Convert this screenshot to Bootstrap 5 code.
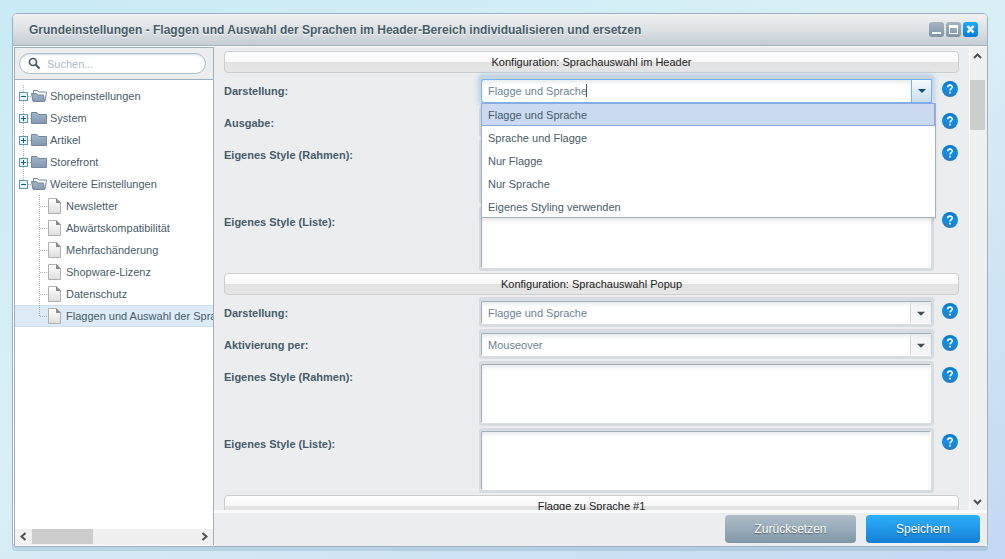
<!DOCTYPE html>
<html lang="de">
<head>
<meta charset="utf-8">
<meta name="viewport" content="width=device-width, initial-scale=1">
<title>Grundeinstellungen</title>
<link href="https://cdn.jsdelivr.net/npm/bootstrap@5.3.0/dist/css/bootstrap.min.css" rel="stylesheet">
<style>
  body { font: 11px/16px "Liberation Sans", Arial, sans-serif; color: #475c6a; padding: 13px 17px 12px 12px;
    background: linear-gradient(155deg, #c8ebf5 0%, #d9eff5 45%, #d3e7f4 65%, #c2d9f2 100%); }
  .window { min-height: 0; border: 1px solid #9fb1c0; border-radius: 5px 5px 4px 4px; background: #fafbfb; box-shadow: 0 4px 0 rgba(130,160,185,.3); }
  .window-body, .scroller { min-height: 0; }
  .titlebar { height: 32px; padding: 0 9px 0 16px; border-bottom: 1px solid #9fb1c0; border-radius: 4px 4px 0 0;
    background: linear-gradient(#f0f1f2, #dfe3e6 45%, #c4cdd4); }
  .titlebar h1 { font-size: 12px; line-height: 16px; font-weight: bold; color: #475c6a; text-shadow: 0 1px 0 #fff; }
  .tools { gap: 2px; }
  .tool { width: 15px; height: 15px; border: 0; padding: 0; border-radius: 3px; background: linear-gradient(#a3b4c1, #7f95a5); }
  .tool-close { background: linear-gradient(#1eaaff, #0a7bd6); }
  .tool svg, .help svg { display: block; }

  .sidebar { width: 200px; margin: 1px 0 1px 1px; border: 1px solid #9fb1c0; border-bottom: 0; background: #fff; }
  .searchbar { height: 32px; padding: 5px 7px 5px 4px; background: #ebedef; border-bottom: 1px solid #9fb1c0; }
  .searchbar svg { position: absolute; left: 9px; top: 4px; }
  .searchbar input { height: 21px; padding: 0 8px 0 27px; border: 1px solid #aebfce; border-radius: 11px; font-size: 11px; color: #475c6a;
    box-shadow: inset 0 1px 2px #d4dde4; }
  .searchbar input::placeholder { color: #aabac6; opacity: 1; }
  .tree { padding: 5px 0 0; }
  .tree a { height: 22px; padding-left: 4px; color: #475c6a; text-decoration: none; white-space: nowrap; }
  .tree a.selected { background: #dcebf6; box-shadow: inset 0 1px #cddfee, inset 0 -1px #cddfee; }
  .tree svg { flex: none; display: block; }
  .hscroll { height: 16px; background: #f0f0f0; padding: 0 5px; }
  .hthumb { width: 61px; height: 15px; background: #cdcdcd; margin-left: 6px; }

  .pane { min-width: 0; background: #ebedef; margin-top: 1px; }
  .fields { padding: 4px 10px 0; gap: 2px; }
  .section-head { flex: none; height: 22px; border: 1px solid #cdcdcd; border-radius: 4px; font-size: 11px; line-height: 20px; color: #222; font-weight: normal;
    background: linear-gradient(#fff, #f8f8f8 50%, #e2e2e2 50%, #e6e6e6); }
  .field-row { flex: none; }
  .field-row > label { width: 255px; flex: none; padding-top: 8px; font-weight: bold; line-height: 16px; }
  .halo { background: #d7dce2; border-radius: 3px; padding: 4px 2px 3px; }
  .halo-area { padding: 3px 3px 3px 2px; }
  .halo .form-control, .halo .form-select { border: 1px solid #9fafba; border-right-color: #c5ced6; border-bottom-color: #fff; border-radius: 2px;
    font-size: 11px; line-height: 16px; color: #6b8394; padding: 0 6px; background-color: #fff; box-shadow: inset 0 3px 4px -1px #e3e8e8; }
  .halo .form-select { height: 23px; }
  .halo textarea.form-control { height: 59px; resize: none; display: block; border-right-color: #fff; }
  .halo .form-select { padding-right: 26px; background-repeat: no-repeat; background-position: right; background-size: 21px 22px;
    background-image: url("data:image/svg+xml,%3Csvg xmlns='http://www.w3.org/2000/svg' width='21' height='22'%3E%3Crect width='21' height='22' fill='%23f4f6f8'/%3E%3Cpath d='M.5 0V22' stroke='%23ced5da'/%3E%3Cpath d='M7 10h8l-4 4z' fill='%23404c56'/%3E%3C/svg%3E"); }
  .focused .halo { padding-bottom: 2px; background: linear-gradient(#c5d4e0, #d7dce2); box-shadow: 0 0 5px rgba(110,180,235,.6); }
  .halo .form-control.combo { height: 24px; border: 1px solid #74b2e8; border-right: 0; border-radius: 3px 0 0 3px; }
  .trigger { width: 21px; border: 1px solid #74b2e8; padding: 0; background: linear-gradient(#f6fafd, #c9dcec); }
  .caret-bar { position: absolute; left: 107px; top: 9px; width: 1px; height: 13px; background: #475c6a; }
  .options { position: absolute; z-index: 5; left: 2px; right: -2px; top: 28px; background: #fff; border: 1px solid #9fb1c0; border-top: 0; box-shadow: 0 3px 3px rgba(0,0,0,.08); }
  .options li { height: 23px; padding: 0 6px; line-height: 24px; }
  .options li:last-child { height: 22px; }
  .options li.active { margin-left: -1px; border: 1px solid #8da9e2; line-height: 23px; background: #cbdaf0; }
  .help { width: 16px; height: 16px; margin: 6px 1px 0 8px; border: 0; padding: 0; background: none; flex: none; }
  .vscroll { width: 18px; background: #f0f0f0; border-left: 1px solid #fff; padding: 5px 2px 4px 0; }
  .vthumb { width: 15px; height: 50px; background: #cdcdcd; margin-top: 20px; }
  .actions { height: 36px; padding: 2px 7px 0 0; gap: 10px; border-top: 3px solid #fafbfb; }
  .actions .btn { height: 28px; padding: 0; border: 0; border-radius: 4px; font-size: 12px; line-height: 28px; color: #fff; text-shadow: 0 1px 1px rgba(0,0,0,.4); }
  .btn-reset { width: 131px; background: linear-gradient(#aebdc8, #8097a7); }
  .btn-save { width: 114px; background: linear-gradient(#2cb0fa, #167ed5); }
</style>
</head>
<body class="vh-100 d-flex flex-column overflow-hidden">
<svg class="position-absolute" width="0" height="0" aria-hidden="true">
  <defs>
    <linearGradient id="gf" x2="0" y2="1"><stop stop-color="#a3b6c9"/><stop offset="1" stop-color="#8298b0"/></linearGradient>
    <linearGradient id="gp" x2="0" y2="1"><stop stop-color="#fff"/><stop offset="1" stop-color="#dedede"/></linearGradient>
    <linearGradient id="gh" x2="0" y2="1"><stop stop-color="#0a75c4"/><stop offset=".45" stop-color="#0d8fe8"/><stop offset="1" stop-color="#2a7bbb"/></linearGradient>
  </defs>
</svg>
<main class="window flex-grow-1 d-flex flex-column">
  <header class="titlebar d-flex align-items-center flex-shrink-0">
    <h1 class="m-0 flex-grow-1">Grundeinstellungen - Flaggen und Auswahl der Sprachen im Header-Bereich individualisieren und ersetzen</h1>
    <div class="tools d-flex">
      <button class="tool" aria-label="Minimieren"><svg width="15" height="15"><path d="M3 10h9v2H3z" fill="#fff"/></svg></button>
      <button class="tool" aria-label="Maximieren"><svg width="15" height="15"><path d="M3 3h9v9H3zM4 6v5h7V6z" fill="#fff" fill-rule="evenodd"/></svg></button>
      <button class="tool tool-close" aria-label="Schließen"><svg width="15" height="15"><path d="M4.500 4l6 6.500M10.500 4l-6 6.500" stroke="#fff" stroke-width="2.500"/></svg></button>
    </div>
  </header>
  <div class="window-body d-flex flex-grow-1">
    <aside class="sidebar d-flex flex-column flex-shrink-0 overflow-hidden">
      <div class="searchbar flex-shrink-0">
        <div class="position-relative">
          <input type="search" class="form-control" placeholder="Suchen..." aria-label="Suchen">
          <svg width="13" height="13" fill="none" stroke="#475c6a"><circle cx="5" cy="5" r="3.500" stroke-width="1.700"/><path d="M7.500 7.500L11.500 11.500" stroke-width="2.200"/></svg>
        </div>
      </div>
      <nav class="tree flex-grow-1 overflow-hidden" id="tree" aria-label="Einstellungen"></nav>
      <div class="hscroll d-flex flex-shrink-0" aria-hidden="true">
        <svg width="6" height="15"><path d="M5.500 4L1.500 7.500L5.500 11" fill="none" stroke="#505050" stroke-width="2"/></svg>
        <div class="hthumb"></div>
        <svg class="ms-auto" width="6" height="15"><path d="M.5 4L4.500 7.500L.5 11" fill="none" stroke="#505050" stroke-width="2"/></svg>
      </div>
    </aside>
    <section class="pane flex-grow-1 d-flex flex-column">
      <div class="scroller d-flex flex-grow-1 overflow-hidden">
        <form class="fields d-flex flex-column flex-grow-1">
          <h2 class="section-head m-0 text-center">Konfiguration: Sprachauswahl im Header</h2>
          <div class="field-row focused d-flex align-items-start">
            <label for="f1">Darstellung:</label>
            <div class="halo flex-grow-1 position-relative d-flex">
              <input id="f1" type="text" class="form-control combo" role="combobox" aria-expanded="true" aria-controls="opts" value="Flagge und Sprache">
              <button type="button" class="trigger flex-shrink-0" aria-label="Auswahl"><svg class="d-block mx-auto" width="8" height="4"><path d="M0 0h8L4 4z" fill="#0d4f86"/></svg></button>
              <span class="caret-bar"></span>
              <ul class="options list-unstyled m-0" id="opts" role="listbox">
                <li class="active" role="option" aria-selected="true">Flagge und Sprache</li>
                <li role="option">Sprache und Flagge</li>
                <li role="option">Nur Flagge</li>
                <li role="option">Nur Sprache</li>
                <li role="option">Eigenes Styling verwenden</li>
              </ul>
            </div>
            <button type="button" class="help" aria-label="Hilfe"></button>
          </div>
          <div class="field-row d-flex align-items-start">
            <label for="f2">Ausgabe:</label>
            <div class="halo flex-grow-1"><select id="f2" class="form-select"><option></option></select></div>
            <button type="button" class="help" aria-label="Hilfe"></button>
          </div>
          <div class="field-row d-flex align-items-start">
            <label for="f3">Eigenes Style (Rahmen):</label>
            <div class="halo halo-area flex-grow-1"><textarea id="f3" class="form-control"></textarea></div>
            <button type="button" class="help" aria-label="Hilfe"></button>
          </div>
          <div class="field-row d-flex align-items-start">
            <label for="f4">Eigenes Style (Liste):</label>
            <div class="halo halo-area flex-grow-1"><textarea id="f4" class="form-control"></textarea></div>
            <button type="button" class="help" aria-label="Hilfe"></button>
          </div>
          <h2 class="section-head m-0 text-center">Konfiguration: Sprachauswahl Popup</h2>
          <div class="field-row d-flex align-items-start">
            <label for="f5">Darstellung:</label>
            <div class="halo flex-grow-1"><select id="f5" class="form-select"><option>Flagge und Sprache</option></select></div>
            <button type="button" class="help" aria-label="Hilfe"></button>
          </div>
          <div class="field-row d-flex align-items-start">
            <label for="f6">Aktivierung per:</label>
            <div class="halo flex-grow-1"><select id="f6" class="form-select"><option>Mouseover</option></select></div>
            <button type="button" class="help" aria-label="Hilfe"></button>
          </div>
          <div class="field-row d-flex align-items-start">
            <label for="f7">Eigenes Style (Rahmen):</label>
            <div class="halo halo-area flex-grow-1"><textarea id="f7" class="form-control"></textarea></div>
            <button type="button" class="help" aria-label="Hilfe"></button>
          </div>
          <div class="field-row d-flex align-items-start">
            <label for="f8">Eigenes Style (Liste):</label>
            <div class="halo halo-area flex-grow-1"><textarea id="f8" class="form-control"></textarea></div>
            <button type="button" class="help" aria-label="Hilfe"></button>
          </div>
          <h2 class="section-head m-0 text-center">Flagge zu Sprache #1</h2>
        </form>
        <div class="vscroll d-flex flex-column align-items-start flex-shrink-0" aria-hidden="true">
          <svg width="15" height="8"><path d="M4 6L7.500 2.500L11 6" fill="none" stroke="#505050" stroke-width="2"/></svg>
          <div class="vthumb"></div>
          <svg class="mt-auto" width="15" height="8"><path d="M4 2L7.500 5.500L11 2" fill="none" stroke="#505050" stroke-width="2"/></svg>
        </div>
      </div>
      <footer class="actions d-flex justify-content-end flex-shrink-0">
        <button type="button" class="btn btn-reset">Zurücksetzen</button>
        <button type="button" class="btn btn-save">Speichern</button>
      </footer>
    </section>
  </div>
</main>
<script src="https://cdn.jsdelivr.net/npm/bootstrap@5.3.0/dist/js/bootstrap.bundle.min.js"></script>
<script>
  const dots = 'stroke="#b0b0b0" stroke-dasharray="1 1"';
  const box = open => `<rect x=".5" y="7.500" width="8" height="8" fill="#e4f5fa" stroke="#5f97ab"/><path d="M2 11.500h5${open ? '' : 'M4.500 9v5'}" stroke="#1f5f78"/>`;
  const folderOpen = '<path d="M14.500 8.500v-3h4l1 1.500h8l-1.500 9" fill="#fff" stroke="#7288a0"/><path d="M12.500 8.500h5l1 1.500h6l1 6.500h-11.500z" fill="url(#gf)" stroke="#7288a0"/>';
  const folder = '<path d="M12.500 5.500h5.500l1.500 2h8v9h-15z" fill="url(#gf)" stroke="#7288a0"/>';
  const page = '<path d="M29.500 3.500h8l4 4v11h-12z" fill="url(#gp)" stroke="#b0b0b0"/><path d="M37 3l5 5h-5z" fill="#8c8c8c"/>';
  const groups = [['Shopeinstellungen', true], ['System', false], ['Artikel', false], ['Storefront', false], ['Weitere Einstellungen', true]];
  const pages = ['Newsletter', 'Abwärtskompatibilität', 'Mehrfachänderung', 'Shopware-Lizenz', 'Datenschutz', 'Flaggen und Auswahl der Sprachen'];
  document.getElementById('tree').innerHTML =
    groups.map(([t, open], i) => `<a href="#" class="d-flex align-items-center"><svg width="31" height="22"><path d="M4.500 0V${i === 4 ? 8 : 22}M9 11.500h3" ${dots}/>${box(open)}${open ? folderOpen : folder}</svg>${t}</a>`).join('') +
    pages.map((t, i) => `<a href="#" class="d-flex align-items-center${i === 5 ? ' selected' : ''}"><svg width="47" height="22"><path d="M20.500 0V${i === 5 ? 11 : 22}M21 11.500h7" ${dots}/>${page}</svg>${t}</a>`).join('');
  document.querySelectorAll('.help').forEach(b => b.innerHTML =
    '<svg width="16" height="16"><circle cx="8" cy="8" r="8" fill="url(#gh)"/><path d="M5.700 6.300C5.700 3.500 10.300 3.500 10.300 6C10.300 7.500 8 7.600 8 9.500M8 10.800v1.700" fill="none" stroke="#fff" stroke-width="1.600"/></svg>');
</script>
</body>
</html>
